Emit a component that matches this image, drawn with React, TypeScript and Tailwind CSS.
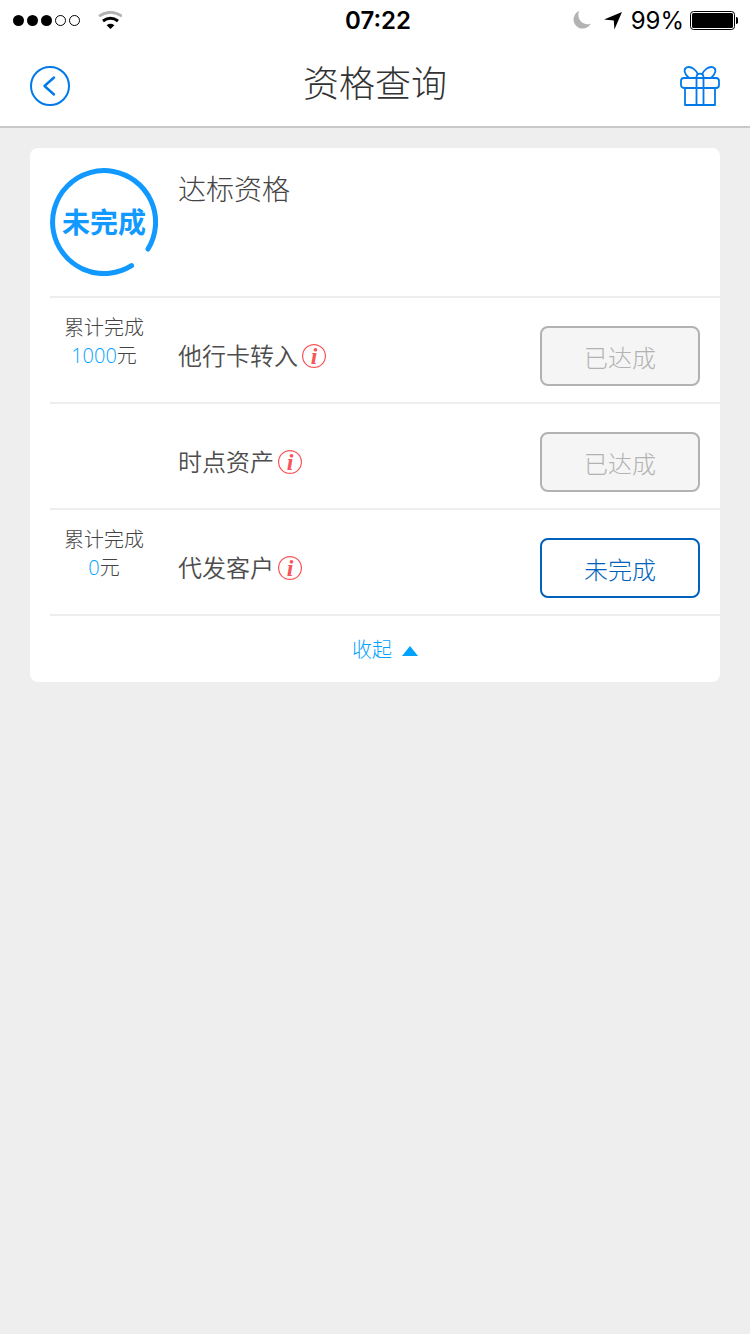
import { useState } from "react";

const tasks = [
  { name: "他行卡转入", amount: "1000", done: true },
  { name: "时点资产", amount: null, done: true },
  { name: "代发客户", amount: "0", done: false },
];

const StatusBar = () => (
  <div className="h-10 px-3 pt-0.5 grid grid-cols-3 items-center text-black font-['Inter','Liberation_Sans',sans-serif]">
    <div className="flex items-center gap-4">
      <svg className="w-[70px] h-3" viewBox="0 0 70 12">
        <circle cx="6.5" cy="5.5" r="5.5" />
        <circle cx="20.5" cy="5.5" r="5.5" />
        <circle cx="34.5" cy="5.5" r="5.5" />
        <circle cx="48.5" cy="5.5" r="5" fill="none" stroke="#000" />
        <circle cx="62.5" cy="5.5" r="5" fill="none" stroke="#000" />
      </svg>
      <svg className="w-6 h-5" viewBox="0 0 24 20" fill="none">
        <path d="M1 5.2Q12.5 -2.6 24 5.2" stroke="#b3b3b3" strokeWidth="2.8" />
        <path d="M5 10Q12.5 4.4 20 10" stroke="#000" strokeWidth="3" />
        <path d="M8.6 14.2Q12.5 11.4 16.4 14.2L12.5 18Z" fill="#000" />
      </svg>
    </div>
    <div className="pl-1.5 text-center text-2xl font-semibold">07:22</div>
    <div className="flex items-center justify-end">
      <svg className="w-5 h-5 mr-3 shrink-0" viewBox="0 0 20 20">
        <path d="M8 0A9.2 9.2 0 1 0 20 12.4C14 15.5 5 10 8 0Z" fill="#b3b3b3" />
      </svg>
      <svg className="w-5 h-5 mr-2 shrink-0" viewBox="0 0 20 20">
        <path d="M19 1L11.4 18.5L10.8 9.4L1 8.4Z" fill="#000" />
      </svg>
      <span className="text-2xl mr-1.5">99%</span>
      <svg className="w-12 h-5 shrink-0" viewBox="0 0 48 20">
        <rect x="0.5" y="0.5" width="44" height="18" rx="3" fill="none" stroke="#000" />
        <rect x="2" y="2" width="41" height="15" rx="1.5" />
        <path d="M46 6a2.4 3.5 0 0 1 0 7Z" />
      </svg>
    </div>
  </div>
);

const Header = () => (
  <header className="h-[88px] px-[30px] flex items-center justify-between border-b-2 border-[#c8c8c8]">
    <button type="button" aria-label="返回" className="mt-1.5">
      <svg className="w-10 h-10" viewBox="0 0 40 40" fill="none" stroke="#007aeb" strokeWidth="2">
        <circle cx="20" cy="20" r="19" />
        <path d="M24 11.5L14.5 20L24 28.5" strokeWidth="2.4" strokeLinecap="round" strokeLinejoin="round" />
      </svg>
    </button>
    <h1 className="pb-1 text-4xl font-light text-[#333]">资格查询</h1>
    <button type="button" aria-label="礼物" className="mt-1.5">
      <svg className="w-10 h-10" viewBox="0 0 40 40" fill="none" stroke="#007aeb" strokeWidth="1.8">
        <rect x="1" y="12" width="38" height="10" rx="3" />
        <path d="M5 22V39H35V22M16.5 39V11Q16.5 7.6 20 7.6T23.5 11V39" strokeLinejoin="round" />
        <path d="M9 12C4 8 3 2.5 7.5 1.2C11.5 0 16.5 4.5 18 8.5" />
        <path d="M31 12C36 8 37 2.5 32.5 1.2C28.5 0 23.5 4.5 22 8.5" />
      </svg>
    </button>
  </header>
);

const InfoIcon = () => (
  <svg className="w-6 h-6" viewBox="0 0 24 24">
    <circle cx="12" cy="12" r="11.4" fill="none" stroke="#f95558" strokeWidth="1.2" />
    <text
      x="12"
      y="20"
      textAnchor="middle"
      fill="#f95558"
      className="text-2xl font-bold italic font-['Liberation_Serif',serif]"
    >
      i
    </text>
  </svg>
);

const App = () => {
  const [open, setOpen] = useState(true);

  return (
    <div className="min-h-screen bg-[#eee] font-['Noto_Sans_CJK_SC',sans-serif]">
      <div className="bg-white">
        <StatusBar />
        <Header />
      </div>

      <main className="px-[30px] py-5">
        <section className="bg-white rounded-lg pl-5">
          <div className="flex gap-5 py-5">
            {/* progress ring */}
            <svg className="w-[108px] h-[108px]" viewBox="0 0 108 108">
              <path
                d="M98 81A51.5 51.5 0 1 0 81.5 97.7"
                fill="none"
                stroke="#1199ff"
                strokeWidth="5"
                strokeLinecap="round"
              />
              <text x="54" y="65" textAnchor="middle" fill="#1199ff" className="text-[28px] font-bold">
                未完成
              </text>
            </svg>
            <h2 className="text-[28px] leading-10 font-light text-[#444]">达标资格</h2>
          </div>

          {open &&
            tasks.map((task) => (
              <div key={task.name} className="h-[106px] pr-5 flex gap-5 border-t-2 border-[#eee]">
                <div className="w-[108px] pt-[15px] text-center text-xl leading-7 font-light text-[#444]">
                  {task.amount !== null && (
                    <>
                      <p>累计完成</p>
                      <p>
                        <span className="text-[#00a2ff] font-['Open_Sans',sans-serif]">{task.amount}</span>元
                      </p>
                    </>
                  )}
                </div>
                <div className="flex-1 flex items-center gap-1 pt-3">
                  <span className="pb-0.5 text-2xl font-[350] text-[#4d4d4d]">{task.name}</span>
                  <button type="button" aria-label="说明">
                    <InfoIcon />
                  </button>
                </div>
                <button
                  type="button"
                  disabled={task.done}
                  className="w-40 h-[60px] mt-7 pt-0.5 rounded-lg border-2 text-2xl font-light border-[#0062bd] text-[#0062bd] disabled:border-[#b2b2b2] disabled:bg-[#f5f5f5] disabled:text-[#b2b2b2]"
                >
                  {task.done ? "已达成" : "未完成"}
                </button>
              </div>
            ))}

          <button
            type="button"
            onClick={() => setOpen(!open)}
            className="w-full h-[68px] flex items-center justify-center gap-2.5 border-t-2 border-[#eee] text-xl font-light text-[#00a2ff]"
          >
            {open ? "收起" : "展开"}
            <svg className={open ? "w-4 h-2.5 mt-1" : "w-4 h-2.5 mt-1 rotate-180"} viewBox="0 0 16 10">
              <path d="M8 0L16 10H0Z" fill="#00a2ff" />
            </svg>
          </button>
        </section>
      </main>
    </div>
  );
};

export default App;
